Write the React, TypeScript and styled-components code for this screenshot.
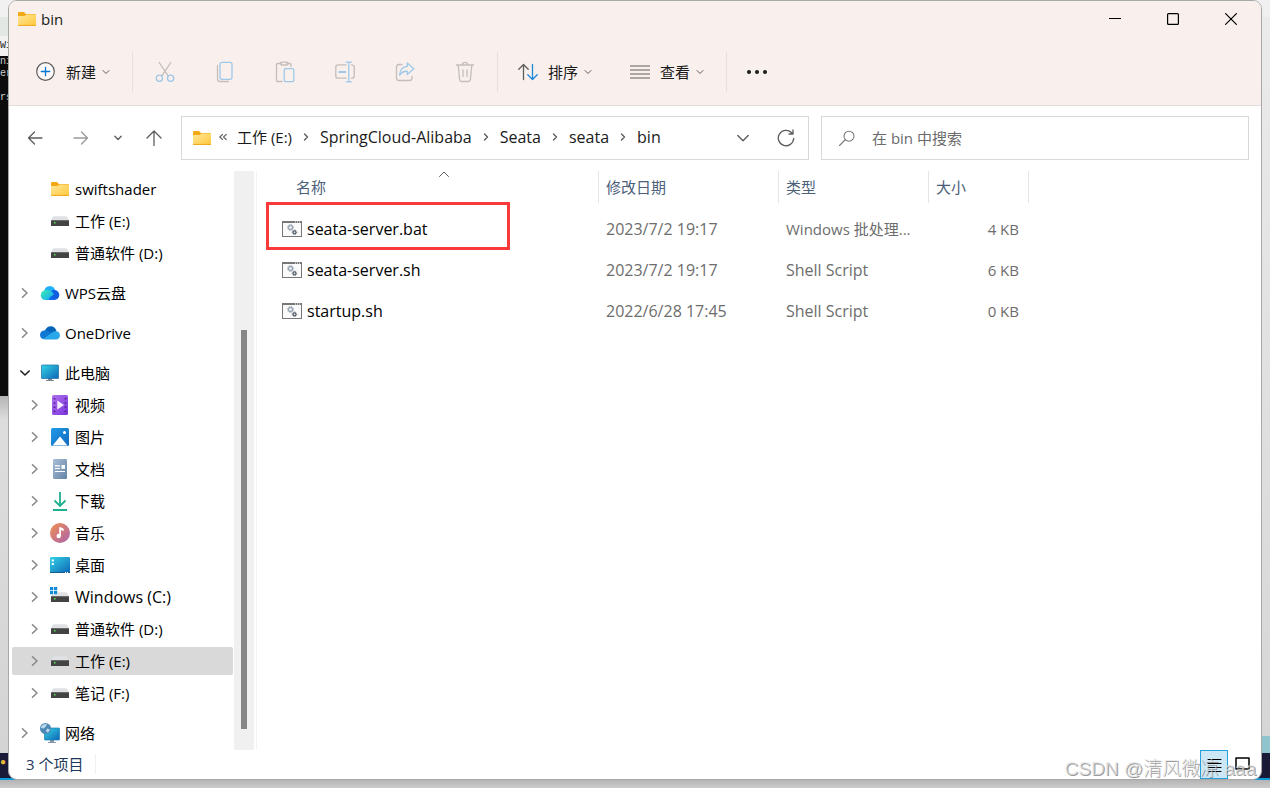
import React from 'react';
import styled, { createGlobalStyle } from 'styled-components';

const GlobalStyle = createGlobalStyle`
  * { box-sizing: border-box; }
  body { margin: 0; }
  body, button, input, table {
    font-family: 'Open Sans', 'Noto Sans CJK SC', sans-serif;
    font-size: 15px;
    line-height: 20px;
  }
  button {
    border: 0;
    padding: 0;
    background: none;
    color: inherit;
    cursor: pointer;
  }
  svg { display: block; flex: none; }
`;

const Desktop = styled.div`
  min-height: 100vh;
  display: flex;
  padding-bottom: 8px;
  background: linear-gradient(to bottom, #ececec, #d8d8d8 98%, #b4b4b4 99%, #cccccc);
`;

const Backdrop = styled.div<{ $side: 'left' | 'right' }>`
  flex: none;
  width: 18px;
  display: flex;
  flex-direction: column;
  overflow: hidden;
  ${(p) => (p.$side === 'left' ? 'margin-right: -10px;' : 'margin-left: -10px;')}
`;

const Slab = styled.div<{ $height?: number; $bg?: string; $fg?: string; $line?: number }>`
  ${(p) => (p.$height ? `flex: none; height: ${p.$height}px;` : 'flex: 1;')}
  background: ${(p) => p.$bg || 'transparent'};
  color: ${(p) => p.$fg || '#222222'};
  font-family: 'Liberation Mono', monospace;
  font-size: 10px;
  line-height: ${(p) => p.$line || 20}px;
`;

const Taskbar = styled(Slab)`
  border-bottom: 2px solid #0c9bd8;
`;

const Window = styled.main`
  position: relative;
  flex: 1;
  min-width: 0;
  display: flex;
  flex-direction: column;
  background: #ffffff;
  border: 1px solid #a8a8a8;
  border-radius: 9px;
  overflow: hidden;
  z-index: 1;
`;

const Header = styled.header`
  background: #f9f0ed;
  border-bottom: 1px solid #e4dcda;
`;

const TitleBar = styled.div`
  height: 36px;
  display: flex;
  align-items: center;
  gap: 5px;
  padding: 0 1px 0 9px;
`;

const Title = styled.h1`
  flex: 1;
  margin: 0;
  font-size: 15px;
  font-weight: 400;
  color: #1a1a1a;
`;

const Controls = styled.div`
  display: flex;
  align-self: stretch;
`;

const ControlButton = styled.button`
  width: 58px;
  display: grid;
  place-items: center;
`;

const Toolbar = styled.div`
  height: 68px;
  display: flex;
  align-items: center;
  padding: 2px 0 0 9px;
`;

const MenuButton = styled.button`
  height: 40px;
  display: flex;
  align-items: center;
  gap: 6px;
  padding: 0 20px 0 18px;
  color: #1a1a1a;
`;

const MenuIcon = styled.span`
  margin-right: 4px;
`;

const IconButton = styled.button<{ $width: number }>`
  width: ${(p) => p.$width}px;
  height: 40px;
  display: grid;
  place-items: center;
`;

const Separator = styled.span`
  width: 1px;
  height: 40px;
  margin: 0 2px;
  background: #e6dfdd;
`;

const Navigation = styled.div`
  display: flex;
  align-items: center;
  padding: 10px 12px 11px 3px;
`;

const AddressBar = styled.div`
  flex: 628 1 628px;
  min-width: 0;
  height: 44px;
  display: flex;
  align-items: center;
  margin: 0 12px 0 5px;
  padding: 0 0 0 11px;
  border: 1px solid #d9d9d9;
`;

const Crumbs = styled.nav`
  flex: 1;
  min-width: 0;
  display: flex;
  align-items: center;
  gap: 10px;
  padding: 0 0 2px 8px;
  white-space: nowrap;
  color: #1a1a1a;
`;

const Crumb = styled.a<{ $latin: boolean }>`
  color: inherit;
  font-size: ${(p) => (p.$latin ? 16 : 15)}px;
  text-decoration: none;
`;

const SearchBox = styled.label`
  flex: 428 1 428px;
  min-width: 0;
  height: 44px;
  display: flex;
  align-items: center;
  gap: 16px;
  padding: 0 16px;
  border: 1px solid #d9d9d9;
`;

const SearchInput = styled.input`
  flex: 1;
  min-width: 0;
  border: 0;
  outline: 0;
  padding: 0;
  background: none;
  &::placeholder { color: #6b6b6b; opacity: 1; }
`;

const Body = styled.div`
  flex: 1;
  display: flex;
`;

const Sidebar = styled.aside`
  flex: none;
  width: 248px;
  display: flex;
  padding-right: 2px;
  border-right: 1px solid #f3f3f3;
`;

const Tree = styled.div`
  flex: 1;
  display: flex;
  flex-direction: column;
  gap: 12px;
  padding: 4px 1px 0 3px;
`;

const Group = styled.ul`
  list-style: none;
  margin: 0;
  padding: 0;
  display: flex;
  flex-direction: column;
  gap: 4px;
`;

const TreeItem = styled.button<{ $level: number; $selected?: boolean }>`
  width: 100%;
  height: 28px;
  display: flex;
  align-items: center;
  padding-left: ${(p) => 8 + p.$level * 10}px;
  border-radius: 2px;
  background: ${(p) => (p.$selected ? '#d9d9d9' : 'transparent')};
  color: #000000;
  white-space: nowrap;
`;

const Twisty = styled.span`
  width: 10px;
  margin-right: 10px;
`;

const TreeLabel = styled.span<{ $large: boolean }>`
  margin-left: 5px;
  font-size: ${(p) => (p.$large ? 16 : 15)}px;
`;

const ScrollTrack = styled.div`
  width: 20px;
  display: flex;
  flex-direction: column;
  align-items: center;
  background: #f0f0f0;
`;

const ScrollGap = styled.span<{ $share: number }>`
  flex: ${(p) => p.$share} 1 0;
`;

const ScrollThumb = styled(ScrollGap)`
  width: 6px;
  background: #868686;
`;

const Files = styled.section`
  flex: 1;
  min-width: 0;
`;

const FileTable = styled.table`
  table-layout: fixed;
  width: 772px;
  border-collapse: separate;
  border-spacing: 0;
  tbody::before {
    content: '';
    display: block;
    height: 5px;
  }
`;

const HeadCell = styled.th<{ $width: number; $first?: boolean }>`
  position: relative;
  width: ${(p) => p.$width}px;
  height: 32px;
  padding: 0 0 0 ${(p) => (p.$first ? 39 : 7)}px;
  border-right: 1px solid #e5e5e5;
  text-align: left;
  font-weight: 400;
  color: #4c607a;
`;

const SortMark = styled.span`
  position: absolute;
  left: 182px;
  top: 0;
`;

const Cell = styled.td<{ $align?: 'right'; $small?: boolean }>`
  position: relative;
  height: 41px;
  padding: 0 ${(p) => (p.$align ? 10 : 0)}px 0 7px;
  font-size: ${(p) => (p.$small ? 15 : 16)}px;
  text-align: ${(p) => p.$align || 'left'};
  white-space: nowrap;
  color: #6d6d6d;
`;

const FileName = styled.div`
  display: flex;
  align-items: center;
  gap: 5px;
  padding-left: 18px;
  color: #000000;
`;

const Marker = styled.span`
  position: absolute;
  left: 9px;
  top: -6px;
  width: 244px;
  height: 48px;
  border: 3px solid #f93a3a;
`;

const StatusBar = styled.footer`
  height: 29px;
  display: flex;
  align-items: center;
  padding: 0 5px 0 17px;
  color: #1e395b;
`;

const Count = styled.span`
  flex: 1;
  padding-bottom: 2px;
`;

const CountText = styled.span`
  display: inline-block;
  padding-right: 12px;
  border-right: 1px solid #f0f0f0;
`;

const ViewButton = styled.button<{ $active?: boolean }>`
  width: 28px;
  height: 29px;
  display: grid;
  place-items: center;
  border: 1px solid ${(p) => (p.$active ? '#26a0da' : 'transparent')};
  background: ${(p) => (p.$active ? '#cce8f6' : 'transparent')};
`;

const Watermark = styled.div`
  position: absolute;
  right: 5px;
  bottom: -2px;
  font-family: 'Liberation Sans', 'Noto Sans CJK SC', sans-serif;
  font-size: 19px;
  font-weight: 300;
  line-height: 24px;
  white-space: nowrap;
  color: rgba(225, 225, 225, 0.7);
  text-shadow: 1px 1px 0 rgba(110, 110, 110, 0.7);
  pointer-events: none;
`;

type LineProps = { d: string; color?: string; w?: number; size?: number };
const Line = ({ d, color = '#5c5c5c', w = 1.3, size = 20 }: LineProps) => (
  <svg width={size} height={size} viewBox={`0 0 ${size} ${size}`} fill="none" stroke={color} strokeWidth={w} strokeLinecap="round" strokeLinejoin="round">
    <path d={d} />
  </svg>
);

const ChevronDown = () => <Line size={8} w={1} d="M1 2.5L4 5.5L7 2.5" />;

const FolderIcon = () => (
  <svg width="18" height="14" viewBox="0 0 18 14">
    <defs>
      <linearGradient id="folder" x1="0" y1="0" x2="1" y2="1">
        <stop offset="0" stopColor="#ffe69a" />
        <stop offset="1" stopColor="#ffc93c" />
      </linearGradient>
    </defs>
    <path d="M0 1a1 1 0 0 1 1-1h5l2 2h9a1 1 0 0 1 1 1v4H0z" fill="#f3a916" />
    <path d="M0 4h6.5L8.5 2.5H18V13a1 1 0 0 1-1 1H1a1 1 0 0 1-1-1z" fill="url(#folder)" />
    <path d="M0 13.4h18" stroke="#eda71c" />
  </svg>
);

const NewIcon = () => (
  <svg width="20" height="20" viewBox="0 0 20 20" fill="none">
    <circle cx="9.500" cy="9.500" r="8.800" stroke="#5c5c5c" strokeWidth="1.200" fill="#fdf9f8" />
    <path d="M9.500 5.300v8.400M5.300 9.500h8.400" stroke="#0078d4" strokeWidth="1.300" strokeLinecap="round" />
  </svg>
);

const GREY = '#c3bdbb';
const BLUE = '#9fc8e8';

const TwoTone = ({ grey, blue }: { grey: React.ReactNode; blue?: React.ReactNode }) => (
  <svg width="20" height="22" viewBox="0 0 20 22" fill="none" strokeWidth="1.3" strokeLinecap="round" strokeLinejoin="round">
    <g stroke={GREY}>{grey}</g>
    <g stroke={BLUE}>{blue}</g>
  </svg>
);

const CutIcon = () => (
  <TwoTone
    grey={<path d="M4.2 1.5L13 14.6M15.8 1.5L7 14.6" />}
    blue={<><circle cx="4.4" cy="17.2" r="3.1" /><circle cx="15.6" cy="17.2" r="3.1" /></>}
  />
);
const CopyIcon = () => (
  <TwoTone
    grey={<path d="M2.5 4.5V18q0 2.5 2.5 2.5h8.5" />}
    blue={<rect x="5" y="1.3" width="12" height="17" rx="2" />}
  />
);
const PasteIcon = () => (
  <TwoTone
    grey={<><path d="M6 2.5H2.5q-1 0-1 1v16q0 1 1 1H7M12 2.5h3q1 0 1 1v2" /><rect x="5.5" y="1.2" width="7.5" height="2.8" rx="1.4" /></>}
    blue={<rect x="9.2" y="7.6" width="9.6" height="13" rx="1.3" />}
  />
);
const RenameIcon = () => (
  <TwoTone
    grey={<path d="M11 3.8H3q-2.2 0-2.2 2v9.4q0 2 2.2 2h8M16.5 3.8q2.7 0 2.7 2v9.4q0 2-2.7 2" />}
    blue={<><path d="M13.8 1.2v19.6M11.2 1.2h5.2M11.2 20.8h5.2" /><path d="M4.3 11h6" strokeWidth="2" /></>}
  />
);
const ShareIcon = () => (
  <TwoTone
    grey={<path d="M7 3.5H4q-2.5 0-2.5 2.5v11Q1.500 19.500 4 19.500H14.500Q17 19.500 17 17V15.500" />}
    blue={<path d="M12.300 2L18.800 7.800L12.300 13.500V10.300Q7.500 9.800 4.600 14.300Q5 6 12.300 5.400z" />}
  />
);
const DeleteIcon = () => (
  <TwoTone grey={<path d="M1.500 4h17M7.300 4Q7.500 1.300 10 1.300T12.700 4M3.200 4L4.600 18.500Q4.900 20.500 6.600 20.500H13.400Q15.100 20.500 15.400 18.500L16.800 4M8 9v6.500M12 9v6.500" />} />
);

const SortIcon = () => (
  <svg width="20" height="18" viewBox="0 0 20 18" fill="none" strokeWidth="1.3" strokeLinecap="round" strokeLinejoin="round">
    <path d="M5.500 16.500V1.500M.8 6.200L5.500 1.500L10.200 6.200" stroke="#5c5c5c" />
    <path d="M14.500 1.500v15M9.800 11.800l4.700 4.700l4.700-4.700" stroke="#1a86dc" />
  </svg>
);
const ViewIcon = () => (
  <svg width="20" height="14" viewBox="0 0 20 14" stroke="#5c5c5c" strokeWidth="1.200">
    <path d="M0 1h20M0 5h20M0 9h20M0 13h20" />
  </svg>
);
const MoreIcon = () => (
  <svg width="20" height="6" viewBox="0 0 20 6" fill="#1a1a1a">
    <circle cx="2" cy="3" r="2" /><circle cx="10" cy="3" r="2" /><circle cx="18" cy="3" r="2" />
  </svg>
);

const ScriptIcon = () => (
  <svg width="20" height="16" viewBox="0 0 20 16" fill="none">
    <rect x=".5" y=".5" width="19" height="15" fill="#fafafa" stroke="#777777" />
    <path d="M0 1h20" stroke="#777777" strokeWidth="2" />
    <path d="M13 1h1M15 1h1M17 1h1" stroke="#ffffff" />
    <circle cx="8.500" cy="6.500" r="2" stroke="#9aa7b4" strokeWidth="1.300" />
    <circle cx="8.500" cy="6.500" r="3" stroke="#9aa7b4" strokeDasharray="1.200 1.156" />
    <circle cx="12.500" cy="11.300" r="1.400" stroke="#5b6570" strokeWidth="1.200" />
    <circle cx="12.500" cy="11.300" r="2.200" stroke="#5b6570" strokeDasharray="1 .728" />
  </svg>
);

type Kind = 'folder' | 'drive' | 'windrive' | 'wps' | 'onedrive' | 'pc' | 'video' | 'image' | 'doc' | 'download' | 'music' | 'desktop' | 'network';

const drive = (
  <>
    <path d="M4.500 5.300h11Q18 5.500 18.800 9.500H1.200Q2 5.500 4.500 5.300z" fill="#dfe1e5" />
    <rect x="1" y="9" width="18" height="6" rx=".5" fill="#434343" />
    <rect x="1" y="9" width="18" height="1" fill="#6a6a6a" />
    <rect x="4" y="11" width="1.500" height="1.500" fill="#4cf04c" />
  </>
);

const glyphs: Record<Kind, React.ReactNode> = {
  folder: <g transform="translate(1 3)"><FolderIcon /></g>,
  drive,
  windrive: (
    <>
      {drive}
      <path d="M0 0h7.500v7.500H0z" fill="#ffffff" />
      <path d="M0 0h3.200v3.200H0zM4 0h3.200v3.200H4zM0 4h3.200v3.200H0zM4 4h3.200v3.200H4z" fill="#0f8ad8" />
    </>
  ),
  wps: (
    <>
      <circle cx="9.800" cy="8.500" r="5.500" fill="#20b0fa" />
      <circle cx="14.300" cy="12" r="5" fill="#0f5fe0" />
      <path d="M8 17l6-6q-3-4-7.500-4Q.8 7.600.8 12.300T6 17z" fill="url(#wps)" />
      <path d="M8 17h6.500l-3.500-4z" fill="#0f6cf0" />
    </>
  ),
  onedrive: (
    <>
      <path d="M4.800 7.600Q7 3.300 10.800 3.300Q15 3.300 16.500 8L11 12z" fill="#0364b8" />
      <path d="M4 16.200Q0 15.800 0 11.800Q.3 7.500 5 7.200Q8 7.300 10 9L14 12z" fill="#0f78d4" />
      <path d="M3.300 16L13 8.800Q19.500 6.800 20 12.500Q19.700 16.200 16 16.500H5z" fill="#28a8ea" />
    </>
  ),
  pc: (
    <>
      <path d="M8 15h4v2H8zM6 17h8v1H6z" fill="#7b8794" />
      <rect x="1.500" y="2" width="17" height="13.500" rx=".5" fill="url(#screen)" stroke="#1b6fa5" strokeWidth=".7" />
    </>
  ),
  video: (
    <>
      <rect x="2" y="0" width="16" height="20" rx="1.500" fill="url(#video)" />
      <path d="M4.500 3v15M15.500 3v15" stroke="#4b2390" strokeWidth="1.600" strokeDasharray="1.600 2.600" />
      <path d="M7.300 5.500L14 10L7.300 14.500z" fill="#f6ecff" />
    </>
  ),
  image: (
    <>
      <rect x="1" y="1" width="18" height="18" rx="1.500" fill="url(#image)" />
      <path d="M2.500 18.500L10 9.500L17.500 18.500z" fill="#ffffff" />
      <circle cx="14.500" cy="5.500" r="1.500" fill="#ffffff" />
    </>
  ),
  doc: (
    <>
      <rect x="3" y="0" width="14" height="20" rx="1.200" fill="url(#doc)" />
      <path d="M5 6.800h5M5 9.500h5M5 12.500h10" stroke="#ffffff" strokeWidth="1.200" />
      <path d="M11.500 6h3.500v3.800h-3.500z" fill="#ffffff" />
    </>
  ),
  download: (
    <path d="M10 1v13.500M4.500 9.500L10 15l5.500-5.500M3 19h14" fill="none" stroke="#21b08f" strokeWidth="1.800" />
  ),
  music: (
    <>
      <circle cx="10" cy="10" r="10" fill="url(#music)" />
      <circle cx="8.700" cy="13" r="2.200" fill="#ffffff" />
      <path d="M9.200 4.300h1.500l3 1.500v2.400l-2.800-1.300v6H9.200z" fill="#ffffff" />
    </>
  ),
  desktop: (
    <>
      <rect x="0" y="2" width="20" height="16" rx="1" fill="url(#screen)" />
      <path d="M1.800 4.500h2v2h-2zM1.800 8h2v2h-2z" fill="#ffffff" />
      <path d="M0 17.500h20" stroke="#155a8c" strokeWidth="1" />
      <path d="M15 17.500h1M17 17.500h1" stroke="#ffffff" />
    </>
  ),
  network: (
    <>
      <path d="M10 17h4v2h-4zM8 19h8v1H8z" fill="#8a98a5" />
      <rect x="4.500" y="5" width="15" height="12" rx=".5" fill="url(#screen)" stroke="#1b7fb5" strokeWidth=".7" />
      <circle cx="5.500" cy="5.500" r="5.500" fill="#4d89b5" />
      <path d="M1.500 3Q4 .5 7 1.200L5.500 4L3.500 5.500L1 5zM7 5.500l3 1l-2 3.300l-2-1.500z" fill="#b9d9ee" />
    </>
  ),
};

const GradientDefs = styled.svg`
  position: absolute;
`;

const Gradients = () => {
  const list: [string, string, string][] = [
    ['wps', '#3cf0b0', '#12a0f8'],
    ['screen', '#35d3e4', '#0d66b8'],
    ['video', '#b071ee', '#7a34dc'],
    ['image', '#209be8', '#1168bd'],
    ['doc', '#a9bfd6', '#6482a6'],
    ['music', '#f39050', '#a962ae'],
  ];
  return (
    <GradientDefs width="0" height="0" aria-hidden="true">
      <defs>
        {list.map(([id, a, b]) => (
          <linearGradient key={id} id={id} x1="0" y1="0" x2="1" y2="1">
            <stop offset="0" stopColor={a} />
            <stop offset="1" stopColor={b} />
          </linearGradient>
        ))}
      </defs>
    </GradientDefs>
  );
};

type Node = { label: string; kind: Kind; level: number; state?: 'open' | 'closed'; selected?: boolean; large?: boolean };

const groups: Node[][] = [
  [
    { label: 'swiftshader', kind: 'folder', level: 1 },
    { label: '工作 (E:)', kind: 'drive', level: 1 },
    { label: '普通软件 (D:)', kind: 'drive', level: 1 },
  ],
  [{ label: 'WPS云盘', kind: 'wps', level: 0, state: 'closed' }],
  [{ label: 'OneDrive', kind: 'onedrive', level: 0, state: 'closed' }],
  [
    { label: '此电脑', kind: 'pc', level: 0, state: 'open' },
    { label: '视频', kind: 'video', level: 1, state: 'closed' },
    { label: '图片', kind: 'image', level: 1, state: 'closed' },
    { label: '文档', kind: 'doc', level: 1, state: 'closed' },
    { label: '下载', kind: 'download', level: 1, state: 'closed' },
    { label: '音乐', kind: 'music', level: 1, state: 'closed' },
    { label: '桌面', kind: 'desktop', level: 1, state: 'closed' },
    { label: 'Windows (C:)', kind: 'windrive', level: 1, state: 'closed', large: true },
    { label: '普通软件 (D:)', kind: 'drive', level: 1, state: 'closed' },
    { label: '工作 (E:)', kind: 'drive', level: 1, state: 'closed', selected: true },
    { label: '笔记 (F:)', kind: 'drive', level: 1, state: 'closed' },
  ],
  [{ label: '网络', kind: 'network', level: 0, state: 'closed' }],
];

const files = [
  { name: 'seata-server.bat', date: '2023/7/2 19:17', type: 'Windows 批处理...', size: '4 KB', marked: true },
  { name: 'seata-server.sh', date: '2023/7/2 19:17', type: 'Shell Script', size: '6 KB' },
  { name: 'startup.sh', date: '2022/6/28 17:45', type: 'Shell Script', size: '0 KB' },
];

const crumbs = ['工作 (E:)', 'SpringCloud-Alibaba', 'Seata', 'seata', 'bin'];

const tools: [string, React.ReactNode][] = [
  ['剪切', <CutIcon />],
  ['复制', <CopyIcon />],
  ['粘贴', <PasteIcon />],
  ['重命名', <RenameIcon />],
  ['共享', <ShareIcon />],
  ['删除', <DeleteIcon />],
];

export default function App() {
  return (
    <Desktop>
      <GlobalStyle />
      <Gradients />
      <Backdrop $side="left" aria-hidden="true">
        <Slab $height={17} $bg="#f1f1f1" />
        <Slab $height={19} $bg="#e3e8e5" />
        <Slab $height={20} $bg="#f2f2f2">Wi</Slab>
        <Slab $height={340} $bg="#0c0c0c" $fg="#cccccc" $line={12}>ni<br />er<br /><br />rs</Slab>
        <Slab $bg="linear-gradient(#b5b5b5, #dddddd 24px, #d4d4d4)" />
        <Taskbar $height={27} $bg="#1a1a38" $fg="#e8b63a">●</Taskbar>
      </Backdrop>
      <Window>
        <Header>
          <TitleBar>
            <FolderIcon />
            <Title>bin</Title>
            <Controls>
              <ControlButton aria-label="最小化"><Line size={12} w={1} color="#000000" d="M0 5.500H12" /></ControlButton>
              <ControlButton aria-label="最大化"><Line size={12} w={1.2} color="#000000" d="M1.500.6h9q.9 0 .9.900v9q0 .9-.9.900h-9q-.9 0-.9-.9v-9q0-.9.900-.9z" /></ControlButton>
              <ControlButton aria-label="关闭"><Line size={12} w={1.2} color="#000000" d="M.6.6L11.400 11.400M11.400.6L.6 11.400" /></ControlButton>
            </Controls>
          </TitleBar>
          <Toolbar>
            <MenuButton><MenuIcon><NewIcon /></MenuIcon>新建<ChevronDown /></MenuButton>
            <Separator />
            {tools.map(([name, icon]) => (
              <IconButton key={name} $width={60} aria-label={name}>{icon}</IconButton>
            ))}
            <Separator />
            <MenuButton><MenuIcon><SortIcon /></MenuIcon>排序<ChevronDown /></MenuButton>
            <MenuButton><MenuIcon><ViewIcon /></MenuIcon>查看<ChevronDown /></MenuButton>
            <Separator />
            <IconButton $width={56} aria-label="更多"><MoreIcon /></IconButton>
          </Toolbar>
        </Header>
        <Navigation>
          <IconButton $width={46} aria-label="后退"><Line size={16} d="M15 8H1.500M7.500 2L1.500 8l6 6" /></IconButton>
          <IconButton $width={46} aria-label="前进"><Line size={16} color="#9a9a9a" d="M1 8h13.500M8.500 2l6 6l-6 6" /></IconButton>
          <IconButton $width={28} aria-label="最近"><Line size={8} d="M.8 2.300L4 5.500L7.200 2.300" /></IconButton>
          <IconButton $width={44} aria-label="向上"><Line size={16} d="M8 15.500V1M1 8l7-7l7 7" /></IconButton>
          <AddressBar>
            <FolderIcon />
            <Crumbs aria-label="路径">
              <Line size={8} w={1.2} color="#6a6a6a" d="M3.500 1.500L.8 4l2.700 2.500M7.200 1.500L4.500 4l2.700 2.500" />
              {crumbs.map((c, i) => (
                <React.Fragment key={c}>
                  {i > 0 && <Line size={8} w={1.4} d="M2.500 1L5.500 4L2.500 7" />}
                  <Crumb href="#" $latin={i > 0}>{c}</Crumb>
                </React.Fragment>
              ))}
            </Crumbs>
            <IconButton $width={42} aria-label="历史"><Line size={12} w={1.4} d="M.8 3.500L6 8.700L11.200 3.500" /></IconButton>
            <IconButton $width={44} aria-label="刷新"><Line size={18} w={1.3} d="M16.700 9.500a7.700 7.700 0 1 1-2.300-6L16 5M16 1v4h-4" /></IconButton>
          </AddressBar>
          <SearchBox>
            <Line size={18} w={1.1} color="#7a7a7a" d="M1.500 16.500L7 11M6 7.200a5 5 0 1 0 10 0a5 5 0 1 0-10 0" />
            <SearchInput type="text" placeholder="在 bin 中搜索" aria-label="搜索" />
          </SearchBox>
        </Navigation>
        <Body>
          <Sidebar>
            <Tree>
              {groups.map((g, i) => (
                <Group key={i}>
                  {g.map((n) => (
                    <li key={n.label}>
                      <TreeItem $level={n.level} $selected={n.selected}>
                        <Twisty>
                          {n.state === 'closed' && <Line size={10} w={1.5} color="#868686" d="M2.500.8L7 5L2.500 9.200" />}
                          {n.state === 'open' && <Line size={10} w={1.6} color="#222222" d="M.8 3L5 7L9.200 3" />}
                        </Twisty>
                        <svg width="20" height="20" viewBox="0 0 20 20">{glyphs[n.kind]}</svg>
                        <TreeLabel $large={!!n.large}>{n.label}</TreeLabel>
                      </TreeItem>
                    </li>
                  ))}
                </Group>
              ))}
            </Tree>
            <ScrollTrack>
              <ScrollGap $share={159} />
              <ScrollThumb $share={399} />
              <ScrollGap $share={21} />
            </ScrollTrack>
          </Sidebar>
          <Files>
            <FileTable>
              <thead>
                <tr>
                  <HeadCell $width={342} $first>
                    名称
                    <SortMark><Line size={10} w={1} d="M.5 5.500L5 1L9.500 5.500" /></SortMark>
                  </HeadCell>
                  <HeadCell $width={180}>修改日期</HeadCell>
                  <HeadCell $width={150}>类型</HeadCell>
                  <HeadCell $width={100}>大小</HeadCell>
                </tr>
              </thead>
              <tbody>
                {files.map((f) => (
                  <tr key={f.name}>
                    <Cell>
                      <FileName><ScriptIcon />{f.name}</FileName>
                      {f.marked && <Marker />}
                    </Cell>
                    <Cell>{f.date}</Cell>
                    <Cell $small={f.marked}>{f.type}</Cell>
                    <Cell $small $align="right">{f.size}</Cell>
                  </tr>
                ))}
              </tbody>
            </FileTable>
          </Files>
        </Body>
        <StatusBar>
          <Count><CountText>3 个项目</CountText></Count>
          <ViewButton $active aria-label="详细信息"><Line size={15} w={1} color="#000000" d="M1 2.500h13M1 6.500h13M1 10.500h13M1 14.500h13" /></ViewButton>
          <ViewButton aria-label="大图标"><Line size={15} w={1.5} color="#000000" d="M1 1h13v11H1z" /></ViewButton>
        </StatusBar>
        <Watermark>CSDN @清风微凉 aaa</Watermark>
      </Window>
      <Backdrop $side="right" aria-hidden="true">
        <Slab $height={17} $bg="#f0f0f0" />
        <Slab $bg="linear-gradient(#ebebeb, #d6d6d6)" />
        <Slab $height={17} $bg="#8fc4cc" />
        <Taskbar $height={27} $bg="#1a1a38" />
      </Backdrop>
    </Desktop>
  );
}
